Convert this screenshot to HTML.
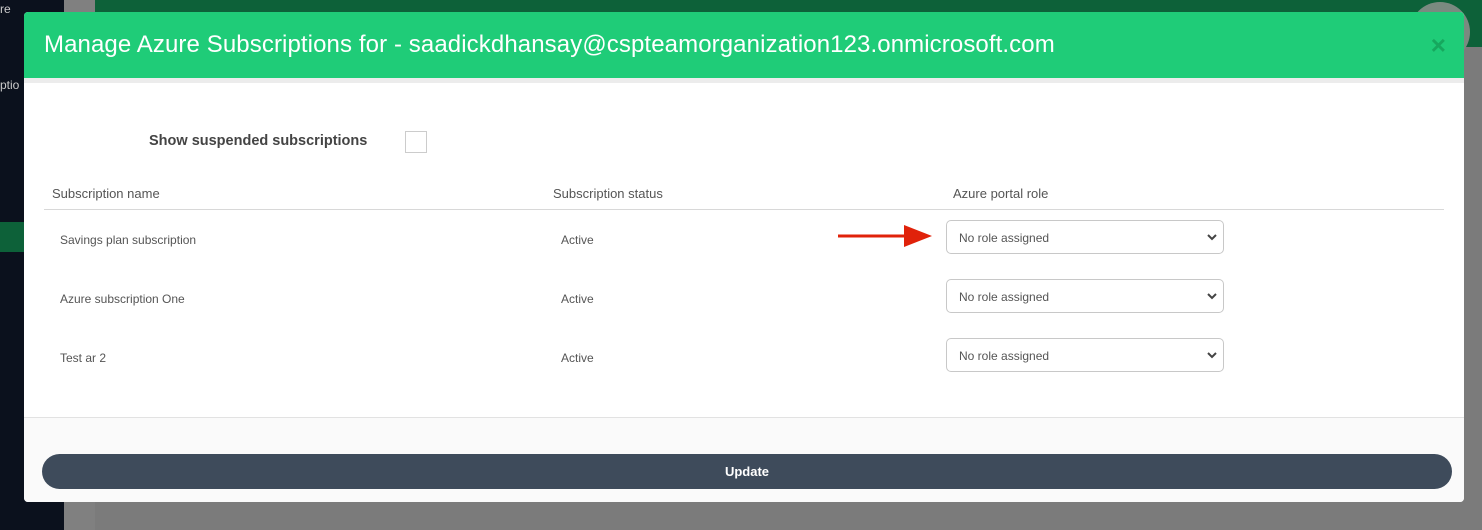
<!DOCTYPE html>
<html><head><meta charset="utf-8"><style>
*{box-sizing:border-box;margin:0;padding:0}
body{width:1482px;height:530px;overflow:hidden;position:relative;background:#7b7b7b;font-family:"Liberation Sans",sans-serif;color:#444}
.side{position:absolute;left:0;top:0;width:64px;height:530px;background:#0b111d}
.sideg{position:absolute;left:0;top:222px;width:64px;height:30px;background:#0d6139}
.top{position:absolute;left:95px;top:0;right:0;height:47px;background:#0d6139}
.strip{position:absolute;left:64px;top:0;width:31px;height:530px;background:#808080}
.modal{position:absolute;left:24px;top:12px;width:1440px;height:490px;background:#fff;border-radius:4px;overflow:hidden}
.hdr{height:66px;background:#1fcc78;color:#fff;font-size:24px;letter-spacing:0.1px;padding:19px 0 0 20px;position:relative}
.x{position:absolute;right:18px;top:18px;color:#16a85e;font-size:26px;font-weight:bold}
.gs{height:5px;background:#ececec}
.lbl{position:absolute;left:125px;top:121px;font-size:14.5px;font-weight:bold;color:#444}
.cb{position:absolute;left:381px;top:119px;width:22px;height:22px;border:1px solid #ccc}
.th{position:absolute;top:174px;font-size:13px;color:#555}
.line{position:absolute;left:20px;top:197px;width:1400px;height:1px;background:#d8d8d8}
.td{position:absolute;font-size:12px;color:#555}
.sel{position:absolute;left:922px;width:278px;height:34px;border:1px solid #c8c8c8;border-radius:5px;font-size:12px;color:#555;padding:10px 0 0 12px}
.sel svg{position:absolute;right:6px;top:13px}
.ftr{position:absolute;left:0;top:405px;width:1440px;height:85px;background:#fafafa;border-top:1px solid #e2e2e2}
.btn{position:absolute;left:18px;top:36px;width:1410px;height:35px;background:#3e4b5b;border-radius:18px;color:#fff;font-size:13px;font-weight:bold;text-align:center;line-height:35px}
</style></head><body>
<div class="side"></div><div class="sideg"></div><div class="strip"></div><div class="top"></div>
<div style="position:absolute;left:0;top:2px;color:#ccc;font-size:12px">re</div>
<div style="position:absolute;left:0;top:78px;color:#ccc;font-size:12px">ptio</div>
<div style="position:absolute;left:1410px;top:2px;width:60px;height:60px;border-radius:50%;background:#7a8a80"></div>
<div class="modal">
<div class="hdr">Manage Azure Subscriptions for - saadickdhansay@cspteamorganization123.onmicrosoft.com<span class="x">×</span></div>
<div class="gs"></div>
<div class="lbl">Show suspended subscriptions</div><div class="cb"></div>
<div class="th" style="left:28px">Subscription name</div>
<div class="th" style="left:529px">Subscription status</div>
<div class="th" style="left:929px">Azure portal role</div>
<div class="line"></div>
<div class="td" style="left:36px;top:221px">Savings plan subscription</div>
<div class="td" style="left:537px;top:221px">Active</div>
<div class="td" style="left:36px;top:280px">Azure subscription One</div>
<div class="td" style="left:537px;top:280px">Active</div>
<div class="td" style="left:36px;top:339px">Test ar 2</div>
<div class="td" style="left:537px;top:339px">Active</div>
<svg style="position:absolute;left:814px;top:210px" width="94" height="28"><path d="M0 14H68" stroke="#e0220a" stroke-width="3"/><path d="M66 3L94 14L66 25Z" fill="#e0220a"/></svg>
<div class="sel" style="top:208px">No role assigned<svg width="10" height="7"><path d="M1 1L5 5L9 1" stroke="#444" stroke-width="2" fill="none"/></svg></div>
<div class="sel" style="top:267px">No role assigned<svg width="10" height="7"><path d="M1 1L5 5L9 1" stroke="#444" stroke-width="2" fill="none"/></svg></div>
<div class="sel" style="top:326px">No role assigned<svg width="10" height="7"><path d="M1 1L5 5L9 1" stroke="#444" stroke-width="2" fill="none"/></svg></div>
<div class="ftr"><div class="btn">Update</div></div>
</div>
</body></html>
